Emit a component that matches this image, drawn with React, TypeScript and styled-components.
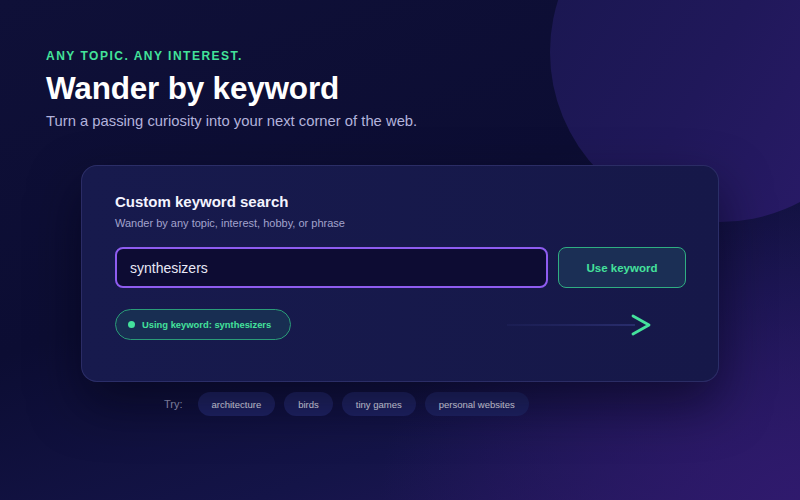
import styled, { createGlobalStyle } from 'styled-components';

const GlobalStyle = createGlobalStyle`
  html, body {
    margin: 0;
    padding: 0;
    width: 800px;
    height: 500px;
    overflow: hidden;
  }
  body {
    font-family: "Liberation Sans", Arial, sans-serif;
    background: #0c0d33;
  }
`

const Page = styled.div`
  position: relative;
  width: 800px;
  height: 500px;
  overflow: hidden;
  box-sizing: border-box;
  padding: 48px 0 0 46px;
  background:
    radial-gradient(ellipse 420px 320px at 100% 100%, rgba(48, 26, 110, 0.95), rgba(48, 26, 110, 0) 100%),
    linear-gradient(160deg, #0f1038 0%, #0c0d33 45%, #141448 75%, #25185e 100%);
`

const Orb = styled.div`
  position: absolute;
  left: 550px;
  top: -118px;
  width: 340px;
  height: 340px;
  border-radius: 50%;
  background: linear-gradient(120deg, #19174f 0%, #20185a 50%, #2c1b6c 100%);
  pointer-events: none;
`

const Header = styled.header`
  position: relative;
  display: flex;
  flex-direction: column;
`

const Eyebrow = styled.div`
  color: #43e39a;
  font-size: 12px;
  font-weight: 700;
  letter-spacing: 1.5px;
  line-height: 16px;
`

const Title = styled.h1`
  margin: 5px 0 0;
  color: #ffffff;
  font-size: 31.5px;
  font-weight: 700;
  line-height: 38px;
  letter-spacing: -0.2px;
`

const Lead = styled.p`
  margin: 4px 0 0;
  color: #b3b3dc;
  font-size: 14.8px;
  line-height: 20px;
`

const Card = styled.section`
  position: relative;
  box-sizing: border-box;
  width: 638px;
  margin: 34px 0 0 35px;
  padding: 27px 32px 41px 33px;
  border-radius: 16px;
  background: linear-gradient(90deg, #171a4d 0%, #161849 100%);
  border: 1px solid rgba(120, 120, 200, 0.22);
  box-shadow: 0 22px 50px rgba(4, 4, 20, 0.55);
`

const CardTitle = styled.h2`
  margin: 0;
  color: #f4f4ff;
  font-size: 15px;
  font-weight: 700;
  line-height: 18px;
`

const CardHint = styled.p`
  margin: 5px 0 0;
  color: #a3a3cc;
  font-size: 11px;
  line-height: 14px;
`

const SearchRow = styled.div`
  display: flex;
  gap: 10px;
  margin-top: 17px;
`

const Input = styled.input`
  flex: 1;
  box-sizing: border-box;
  height: 41px;
  padding: 0 13px;
  border: 2px solid #8e5cf0;
  border-radius: 8px;
  background: #0d0c33;
  color: #e8e8f6;
  font-family: inherit;
  font-size: 14px;
  outline: none;
`

const UseButton = styled.button`
  box-sizing: border-box;
  width: 128px;
  height: 41px;
  border: 1.5px solid #2fae82;
  border-radius: 8px;
  background: #1b2f55;
  color: #44e29c;
  font-family: inherit;
  font-size: 11.5px;
  font-weight: 700;
  cursor: pointer;
`

const StatusRow = styled.div`
  display: flex;
  align-items: center;
  justify-content: space-between;
  margin-top: 21px;
`

const StatusPill = styled.div`
  display: inline-flex;
  align-items: center;
  gap: 7px;
  box-sizing: border-box;
  height: 31px;
  padding: 0 19px 0 12px;
  border: 1.5px solid #2a9c78;
  border-radius: 16px;
  background: #182e52;
  color: #44e29c;
  font-size: 9.4px;
  font-weight: 700;
`

const Dot = styled.span`
  width: 7px;
  height: 7px;
  border-radius: 50%;
  background: #44e29c;
`

const ArrowDecor = styled.svg`
  width: 145px;
  height: 24px;
  margin-right: 34px;
`

const TryRow = styled.div`
  display: flex;
  align-items: center;
  gap: 9px;
  margin: 10px 0 0 118px;
`

const TryLabel = styled.span`
  margin-right: 6px;
  color: #a8a8cc;
  font-size: 11px;
`

const Chip = styled.button`
  height: 24px;
  padding: 0 14px;
  border: none;
  border-radius: 12px;
  background: #202466;
  color: #f0f0ff;
  font-family: inherit;
  font-size: 9.5px;
  cursor: pointer;
`

const suggestions = ['architecture', 'birds', 'tiny games', 'personal websites'];

export default function App() {
  return (
    <>
      <GlobalStyle />
      <Page>
        <Orb />
        <Header>
          <Eyebrow>ANY TOPIC. ANY INTEREST.</Eyebrow>
          <Title>Wander by keyword</Title>
          <Lead>Turn a passing curiosity into your next corner of the web.</Lead>
        </Header>

        <Card>
          <CardTitle>Custom keyword search</CardTitle>
          <CardHint>Wander by any topic, interest, hobby, or phrase</CardHint>
          <SearchRow>
            <Input defaultValue="synthesizers" />
            <UseButton>Use keyword</UseButton>
          </SearchRow>
          <StatusRow>
            <StatusPill>
              <Dot />
              Using keyword: synthesizers
            </StatusPill>
            <ArrowDecor viewBox="0 0 145 24">
              <defs>
                <linearGradient id="trail" gradientUnits="userSpaceOnUse" x1="0" y1="12" x2="128" y2="12">
                  <stop offset="0" stopColor="#2a2e70" stopOpacity="0.3" />
                  <stop offset="1" stopColor="#2f3478" />
                </linearGradient>
              </defs>
              <line x1="0" y1="12" x2="128" y2="12" stroke="url(#trail)" strokeWidth="1.6" />
              <path d="M126 3 L142 12 L126 21" fill="none" stroke="#44e29c" strokeWidth="2.8" strokeLinecap="round" strokeLinejoin="round" />
            </ArrowDecor>
          </StatusRow>
        </Card>

        <TryRow>
          <TryLabel>Try:</TryLabel>
          {suggestions.map((s) => (
            <Chip key={s}>{s}</Chip>
          ))}
        </TryRow>
      </Page>
    </>
  );
}
